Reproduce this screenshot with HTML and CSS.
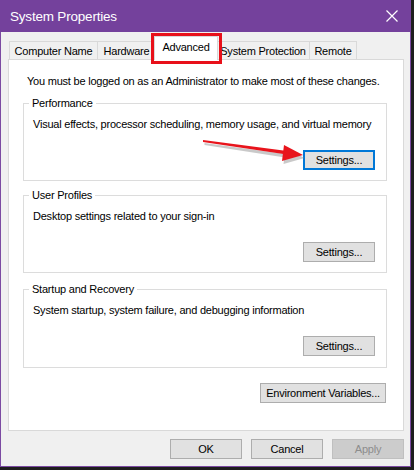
FILE: index.html
```html
<!DOCTYPE html>
<html>
<head>
<meta charset="utf-8">
<link rel="stylesheet" href="styles.css">
</head>
<body>
<div class="window">
  <div class="titlebar">
    <span class="title">System Properties</span>
    <svg class="close" width="12" height="12" viewBox="0 0 12 12"><path d="M0.5 0.5 L11.5 11.5 M11.5 0.5 L0.5 11.5" stroke="#fff" stroke-width="1.2" fill="none"/></svg>
  </div>
  <div class="tabs">
    <div class="tab t-cn">Computer Name</div>
    <div class="tab t-hw">Hardware</div>
    <div class="tab active">Advanced</div>
    <div class="tab t-sp">System Protection</div>
    <div class="tab t-rm">Remote</div>
  </div>
  <div class="panel">
    <p class="note">You must be logged on as an Administrator to make most of these changes.</p>
    <fieldset class="group">
      <legend>Performance</legend>
      <p class="desc">Visual effects, processor scheduling, memory usage, and virtual memory</p>
      <div class="row"><button class="btn focus">Settings...</button></div>
    </fieldset>
    <fieldset class="group">
      <legend>User Profiles</legend>
      <p class="desc">Desktop settings related to your sign-in</p>
      <div class="row"><button class="btn">Settings...</button></div>
    </fieldset>
    <fieldset class="group last">
      <legend>Startup and Recovery</legend>
      <p class="desc">System startup, system failure, and debugging information</p>
      <div class="row"><button class="btn">Settings...</button></div>
    </fieldset>
    <div class="row env"><button class="btn wide">Environment Variables...</button></div>
    <svg class="arrow" width="120" height="40" viewBox="0 0 120 40">
      <g transform="translate(1.5,2)" fill="#8a8a8a" opacity="0.45">
        <path d="M1 4 L89 16 L88 19.5 L1 6 Z"/>
        <path d="M82 9 L101 19 L80 25 Z"/>
      </g>
      <path d="M1 3 L89 14.5 L88 18 L1 5 Z" fill="#e8141c"/>
      <path d="M82 8 L101 18 L80 24 Z" fill="#e8141c"/>
    </svg>
  </div>
  <div class="footer">
    <button class="btn">OK</button>
    <button class="btn">Cancel</button>
    <button class="btn disabled">Apply</button>
  </div>
</div>
</body>
</html>
```
FILE: styles.css
```css
html, body {
  margin: 0;
  padding: 0;
}
body {
  width: 414px;
  height: 470px;
  background: #1e1e1e;
  font-family: "Liberation Sans", Arial, sans-serif;
  font-size: 11px;
  letter-spacing: -0.22px;
  color: #000;
  overflow: hidden;
  white-space: nowrap;
}
.window {
  width: 411px;
  height: 467px;
  box-sizing: border-box;
  background: #f0f0f0;
  border: 1px solid #7b4aa2;
  border-top: 0;
  display: flex;
  flex-direction: column;
}
.titlebar {
  height: 32px;
  flex: none;
  background: #74419c;
  margin: 0 -1px;
  display: flex;
  align-items: center;
  justify-content: space-between;
  padding: 0 10px 0 10px;
  color: #fff;
}
.title {
  font-size: 13.5px;
  letter-spacing: -0.2px;
}
.close {
  margin-right: 3px;
}
.tabs {
  display: flex;
  align-items: flex-end;
  height: 24px;
  margin: 4px 0 -1px 8px;
  position: relative;
  z-index: 1;
}
.tab {
  box-sizing: border-box;
  height: 18px;
  margin-bottom: 1px;
  border: 1px solid #d9d9d9;
  border-bottom: 0;
  background: #f0f0f0;
  text-align: center;
  line-height: 19px;
}
.t-cn { width: 89px; }
.t-hw { width: 59px; margin-left: -1px; margin-right: -2px; }
.t-sp { width: 94px; margin-left: -2px; }
.t-rm { width: 48px; margin-left: -1px; }
.tab.active {
  position: relative;
  z-index: 2;
  height: 24px;
  width: 64px;
  margin-bottom: 0;
  background: #fff;
  line-height: 20px;
}
.tab.active::after {
  content: "";
  position: absolute;
  left: -4px;
  right: -5px;
  top: -4px;
  bottom: -4px;
  border: 3px solid #e8101a;
}
.panel {
  position: relative;
  box-sizing: border-box;
  height: 372px;
  margin: 0 6px 0 7px;
  background: #fff;
  border: 1px solid #d9d9d9;
  padding: 14px 16px 0 14px;
}
.note {
  margin: 0 0 0 4px;
  line-height: 15px;
}
.group {
  margin: 7px 0 0 0;
  padding: 0 11px 10px 9px;
  border: 1px solid #dcdcdc;
}
.group + .group {
  margin-top: 7px;
}
.group.last {
  margin-top: 9px;
  padding-bottom: 11px;
}
.group legend {
  padding: 0 3px;
  margin-left: -4px;
  line-height: 15px;
}
.desc {
  margin: 6px 0 0 0;
  line-height: 15px;
}
.row {
  display: flex;
  justify-content: flex-end;
  margin-top: 18px;
}
.btn {
  box-sizing: border-box;
  width: 72px;
  height: 20px;
  padding: 0;
  font-family: inherit;
  font-size: 11px;
  letter-spacing: -0.22px;
  color: #000;
  background: #e1e1e1;
  border: 1px solid #adadad;
  border-radius: 0;
}
.btn.focus {
  border: 2px solid #0078d7;
}
.env {
  margin-top: 15px;
  margin-right: 1px;
}
.btn.wide {
  width: 126px;
}
.footer {
  display: flex;
  justify-content: flex-end;
  gap: 9px;
  margin: 8px 6px 0 0;
}
.btn.disabled {
  background: #cccccc;
  border-color: #bfbfbf;
  color: #8d8d8d;
}
.arrow {
  position: absolute;
  left: 193px;
  top: 77px;
}
```
